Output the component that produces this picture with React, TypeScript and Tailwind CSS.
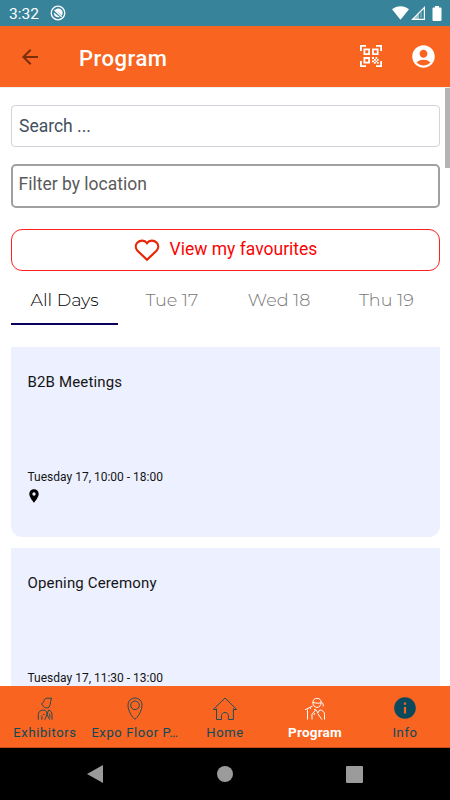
import React from "react";
import { MdAccountCircle, MdArrowBack, MdInfo, MdLocationOn } from "react-icons/md";

const days = ["All Days", "Tue 17", "Wed 18", "Thu 19"];

const events = [
    { title: "B2B Meetings", time: "Tuesday 17, 10:00 - 18:00" },
    { title: "Opening Ceremony", time: "Tuesday 17, 11:30 - 13:00" },
];

const ScanIcon = () => (
    <svg width="22" height="22" viewBox="0 0 22 22" fill="none" stroke="currentColor" strokeWidth="1.800">
        <path d="M.9 6V.9H6M16 .9h5.100V6M21.100 16v5.100H16M6 21.100H.9V16" />
        <path d="M4.400 4.400h4.700v4.700H4.400zM13 4.400h4.700v4.700H13zM4.400 13h4.700v4.700H4.400z" />
        <path
            fill="currentColor"
            stroke="none"
            d="M12 12h2v2h-2zM15.500 12h1.700v2h-1.700zM14 14h1.700v1.700H14zM17 14h1.700v1.700H17zM12 15.500h2v1.700h-2zM15.500 15.500h1.700v1.700h-1.700zM14 17h1.700v1.700H14zM17 17h1.700v1.700H17z"
        />
    </svg>
);

const ExhibitorIcon = () => (
    <svg width="24" height="24" viewBox="0 0 24 24" fill="none" stroke="currentColor" strokeWidth="0.9">
        <path d="M18.700 1.200h-4.500c-2.200 0-3.300 1.400-3.500 3.500L8.500 7l2.800 3.300c1.300.9 3.500.7 4.700-.2 1.200-1.800 1.500-3.500 1.500-5.600z" />
        <path d="M5.300 22.700v-5c0-2.700 1.800-4.200 4.200-4.600h2c1.500 0 2 2.200 2.500 4M14 17.500l1.500-4.400c2.400.6 3.500 2.200 3.500 4.600v5M8.800 22.700v-4M10 17.500h1.500M11.800 22.700l2.200-5.200 2.800 5.200M16.500 16.500l.7 4" />
    </svg>
);

const PinIcon = () => (
    <svg width="24" height="24" viewBox="0 0 24 24" fill="none" stroke="currentColor" strokeWidth="0.9">
        <path d="M12 22.200C9.700 21 5 14 5 8.300 5 4 8 1 12 1s7 3 7 7.300c0 5.700-4.700 12.700-7 13.900z" />
        <circle cx="12" cy="8.300" r="4.300" />
    </svg>
);

const HomeIcon = () => (
    <svg width="26" height="24" viewBox="0 0 26 24" fill="none" stroke="currentColor" strokeWidth="0.9">
        <path d="M4.500 11.500v11h5v-3.700c0-2.100 1.400-3.300 3.400-3.300s3.500 1.200 3.500 3.300v3.700h5v-11M1.300 12.500L13 1l11.700 11.500h-3.200M1.300 12.500h3.200" />
    </svg>
);

const SpeakerIcon = () => (
    <svg width="24" height="24" viewBox="0 0 24 24" fill="none" stroke="currentColor" strokeWidth="1">
        <path d="M9.800 5.500C9.800 3 11.500 1.300 14 1.300s4.200 1.700 4.200 4.200-1.700 4.900-4.200 4.900-4.200-2.400-4.200-4.900z" />
        <path d="M10 5.300c3 1 5.500 1.200 8.200.4M18.200 5c1.700 1 2.300 2.200 2 4.500M2 12.800l7.500-3.700M7 10.500l.7 1.500M4.500 12.500v10M9 22.500v-5.300l3.300-3.900M11 12.800c1.500-.8 2.500.2 3.800 3.200l2-3.200c3 .5 4.700 2.200 4.700 4.700v5M10.800 18l1.200-2M14.800 16.500l4 6" />
    </svg>
);

const tabs = [
    { label: "Exhibitors", icon: <ExhibitorIcon /> },
    { label: "Expo Floor P…", icon: <PinIcon /> },
    { label: "Home", icon: <HomeIcon /> },
    { label: "Program", icon: <SpeakerIcon />, active: true },
    { label: "Info", icon: <MdInfo size={26} className="relative -top-px" /> },
];

const StatusBar = () => (
    <div className="flex h-[26px] shrink-0 items-center bg-[#37839a] pl-[9px] pr-2 text-white">
        <span className="pt-[3px] text-[15.500px] leading-none">3:32</span>
        <svg className="ml-[11px]" width="16" height="16" viewBox="0 0 16 16" fill="none" stroke="currentColor">
            <circle cx="8" cy="8" r="6.800" strokeWidth="1.300" />
            <path d="M3.800 7.500a4.300 4.300 0 0 0 6 4.400zM5 5.200a4.200 4.200 0 0 1 6.800 5.300L9 8z" fill="currentColor" stroke="none" />
            <path d="M4.500 5l7.200 6.800" strokeWidth="1.300" />
        </svg>
        <svg className="ml-auto" width="17" height="14" viewBox="0 0 17 14" fill="currentColor">
            <path d="M0 3.200C5-.8 12-.8 17 3.200L8.500 13.800z" />
        </svg>
        <svg className="ml-0.5" width="14" height="14" viewBox="0 0 14 14" fill="currentColor">
            <path fillRule="evenodd" d="M14 0v14H0zM12.800 3L8 7.800v5h4.800z" />
            <path d="M3 12.800L8 7.800v5z" fill="#37839a" fillOpacity=".5" />
            <path d="M9.200 7.200l1.800-1.700v6.300H9.200z" fillOpacity=".3" />
        </svg>
        <svg className="ml-[7px]" width="10" height="15" viewBox="0 0 10 15" fill="currentColor">
            <path d="M3 0h4v1.500h1.500q1 0 1 1V14q0 1-1 1h-7q-1 0-1-1V2.500q0-1 1-1H3z" />
        </svg>
    </div>
);

const Header = () => (
    <header className="flex h-[61px] shrink-0 items-center bg-[#f96421] pl-[18px] pr-[13px] text-white">
        <MdArrowBack size={24} className="text-[#7b2d0c]" />
        <h1 className="ml-[37px] pt-[3px] text-[22px] font-medium tracking-[0.500px]">Program</h1>
        <div className="ml-auto flex items-center gap-7 pb-px">
            <ScanIcon />
            <MdAccountCircle size={27} />
        </div>
    </header>
);

const BottomNav = () => (
    <nav className="grid h-[62px] shrink-0 grid-cols-5 border-b border-[#c84c18] bg-[#f96421]">
        {tabs.map((tab) => (
            <div
                key={tab.label}
                className={`flex min-w-0 flex-col items-center pt-[10px] ${tab.active ? "text-white" : "text-[#0a4a5c]"}`}
            >
                <div className="flex h-[25px] items-center">{tab.icon}</div>
                <span
                    className={`whitespace-nowrap text-center ${
                        tab.active
                            ? "text-[13.500px] font-bold leading-[22px] tracking-[0.2px]"
                            : "text-[13px] leading-[23px] tracking-[0.600px]"
                    }`}
                >
                    {tab.label}
                </span>
            </div>
        ))}
    </nav>
);

const App = () => {
    return (
        <div className="flex h-[800px] w-[450px] flex-col overflow-hidden bg-white font-[Roboto,sans-serif]">
            <StatusBar />
            <Header />

            <main className="relative min-h-0 flex-1 overflow-hidden border-t border-[#f0f0f0] pl-[11px] pr-[10px] pt-[17px]">
                {/* Scroll thumb */}
                <div className="absolute right-0 -top-px h-[81px] w-[5px] bg-[#b4b4b4]" />

                {/* Search and filter */}
                <div className="flex h-[42px] items-center rounded border border-[#ced4da] px-[7px] text-[17.500px] text-[#42515e]">
                    Search ...
                </div>
                <div className="mt-[17px] flex h-[44px] items-center rounded-[5px] border-2 border-[#a0a0a0] px-[5.500px] pb-[3px] text-[17.500px] text-[#5a5a5a]">
                    Filter by location
                </div>
                <button className="mt-[21px] flex h-[42px] w-full items-center justify-center rounded-[11px] border border-[#ff2020] pb-px text-[17.500px] text-[#fa0505]">
                    <svg className="mr-[10px]" width="26" height="24" viewBox="0 0 26 24" fill="none" stroke="#eb2408" strokeWidth="2.200">
                        <path d="M13 5.200C10.500 1.700 6 2 3.500 4.500 1 7 1.500 10.500 3.500 12.700L13 21.800l9.500-9.100c2-2.200 2.500-5.700 0-8.200S15.500 1.700 13 5.200z" />
                    </svg>
                    View my favourites
                </button>

                {/* Day tabs */}
                <div className="mt-[6px] grid h-[48px] grid-cols-4 font-[Montserrat,Inter,sans-serif] text-[17.600px] font-light">
                    {days.map((day, index) => (
                        <div
                            key={day}
                            className={`flex items-center justify-center border-b-2 ${
                                index === 0 ? "border-[#09005c] text-black" : "border-transparent text-[#777]"
                            }`}
                        >
                            {day}
                        </div>
                    ))}
                </div>

                {/* Sessions */}
                <div className="mt-[22px] flex flex-col gap-[11px]">
                    {events.map((event) => (
                        <div key={event.title} className="flex h-[190px] flex-col rounded-b-[11px] bg-[#ecf0ff] px-[16.500px] pt-[25px] text-[#151515]">
                            <h2 className="text-[15px] leading-5 tracking-[0.15px]">{event.title}</h2>
                            <p className="mt-[77px] text-xs leading-4">{event.time}</p>
                            <MdLocationOn size={16} className="-ml-0.5 mt-[3px] text-black" />
                        </div>
                    ))}
                </div>
            </main>

            <BottomNav />

            {/* System buttons */}
            <div className="flex h-[52px] shrink-0 items-center justify-center gap-[113px] bg-black text-[#9b9b9b]">
                <svg width="17" height="18" viewBox="0 0 17 18" fill="currentColor">
                    <path d="M16 0v18L0 9z" />
                </svg>
                <div className="h-4 w-4 rounded-full bg-current" />
                <div className="h-[17px] w-[17px] rounded-[1px] bg-current" />
            </div>
        </div>
    );
};

export default App;
